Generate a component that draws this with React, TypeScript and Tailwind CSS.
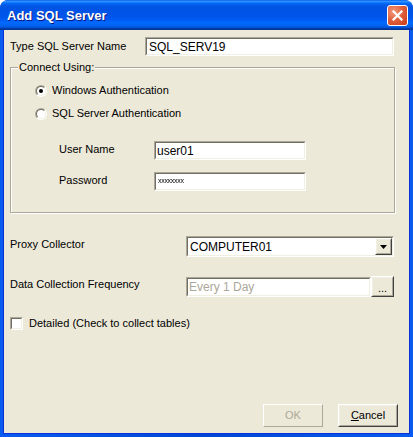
import React from "react";

const font = { fontFamily: '"Liberation Sans", Arial, sans-serif' };

function Sunken({ className = "", children }: { className?: string; children?: React.ReactNode }) {
  return (
    <div
      className={
        "border border-t-[#ACA899] border-l-[#ACA899] border-b-white border-r-white " + className
      }
    >
      <div className="h-full w-full border border-t-[#716F64] border-l-[#716F64] border-b-[#F1EFE2] border-r-[#F1EFE2] bg-white flex items-center">
        {children}
      </div>
    </div>
  );
}

function Raised({ className = "", children }: { className?: string; children?: React.ReactNode }) {
  return (
    <div
      className={
        "border border-t-white border-l-white border-b-[#404040] border-r-[#404040] " + className
      }
    >
      <div className="h-full w-full border border-t-[#F1EFE2] border-l-[#F1EFE2] border-b-[#ACA899] border-r-[#ACA899] bg-[#ECE9D8] flex items-center justify-center">
        {children}
      </div>
    </div>
  );
}

function Radio({ checked }: { checked?: boolean }) {
  return (
    <div className="w-[12px] h-[12px] rounded-full bg-[linear-gradient(135deg,#ACA899_50%,#FFFFFF_50%)] p-[1px]">
      <div className="w-full h-full rounded-full bg-white border border-t-[#716F64] border-l-[#716F64] border-b-[#F1EFE2] border-r-[#F1EFE2] flex items-center justify-center">
        {checked && <div className="w-[4px] h-[4px] rounded-full bg-black" />}
      </div>
    </div>
  );
}

export default function App() {
  return (
    <div
      className="w-[413px] h-[437px] rounded-t-[8px] bg-[#0846D8] flex flex-col overflow-hidden text-[11px] text-black"
      style={font}
    >
      {/* Title bar */}
      <div className="h-[30px] shrink-0 rounded-t-[8px] bg-[linear-gradient(to_bottom,#0058EE_0%,#3593FF_4%,#288EFF_6%,#127DFF_8%,#036FFC_10%,#0262EE_14%,#0057E5_20%,#0054E3_24%,#0055EB_56%,#005BF5_66%,#026AFE_76%,#0062EF_86%,#0052D6_92%,#0040AB_94%,#003092_100%)] flex items-center pl-[7px] pr-[5px]">
        <span className="text-white font-bold text-[13px] [text-shadow:1px_1px_0_#0A1883] flex-1 mt-[2px]">
          Add SQL Server
        </span>
        <div className="w-[21px] h-[21px] rounded-[3px] border border-white bg-[radial-gradient(circle_at_30%_30%,#F29A7E_0%,#E2623E_45%,#C63A15_100%)] flex items-center justify-center">
          <svg width="11" height="11" viewBox="0 0 11 11">
            <path d="M1.5 1.5 L9.5 9.5 M9.5 1.5 L1.5 9.5" stroke="white" strokeWidth="2.2" strokeLinecap="square" />
          </svg>
        </div>
      </div>

      {/* Frame + body */}
      <div className="flex-1 flex px-[3px] pb-[3px] bg-[linear-gradient(to_right,#0A5BF0,#0046D5_50%,#0A5BF0)]">
        <div className="flex-1 bg-[#ECE9D8] border border-[#0831D9] border-t-0 flex flex-col pt-[7px] pl-[6px]">
          {/* Row 1 */}
          <div className="flex items-center h-[19px]">
            <span className="w-[135px]">Type SQL Server Name</span>
            <Sunken className="w-[249px] h-[19px]">
              <span className="pl-[2px] text-[12px]">SQL_SERV19</span>
            </Sunken>
          </div>

          {/* Group box */}
          <div className="mt-[11px] w-[385px] h-[146px] border border-[#ACA899] shadow-[inset_1px_1px_0_#FFFFFF,1px_1px_0_#FFFFFF] flex flex-col">
            <span className="-mt-[7px] ml-[7px] px-[1px] h-[13px] leading-[13px] w-fit bg-[#ECE9D8]">
              Connect Using:
            </span>
            <div className="mt-[10px] ml-[24px] flex items-center h-[13px] gap-[5px]">
              <Radio checked />
              <span>Windows Authentication</span>
            </div>
            <div className="mt-[10px] ml-[24px] flex items-center h-[13px] gap-[5px]">
              <Radio />
              <span>SQL Server Authentication</span>
            </div>
            <div className="mt-[21px] ml-[48px] flex items-center h-[19px]">
              <span className="w-[95px] -mt-[2px]">User Name</span>
              <Sunken className="w-[152px] h-[19px]">
                <span className="pl-[1px] text-[12px]">user01</span>
              </Sunken>
            </div>
            <div className="mt-[12px] ml-[48px] flex items-center h-[19px]">
              <span className="w-[95px] -mt-[2px]">Password</span>
              <Sunken className="w-[152px] h-[19px]">
                <span className="pl-[2px] text-[7px] text-black tracking-[-0.3px] [-webkit-font-smoothing:antialiased] [font-smooth:always] grayscale">xxxxxxxx</span>
              </Sunken>
            </div>
          </div>

          {/* Proxy Collector */}
          <div className="mt-[23px] flex items-center h-[21px]">
            <span className="w-[176px] -mt-[5px]">Proxy Collector</span>
            <Sunken className="w-[208px] h-[21px]">
              <span className="flex-1 pl-[2px] text-[12px]">COMPUTER01</span>
              <Raised className="w-[17px] h-[17px]">
                <svg width="7" height="4" viewBox="0 0 7 4">
                  <path d="M0 0 H7 L3.5 4 Z" fill="black" />
                </svg>
              </Raised>
            </Sunken>
          </div>

          {/* Data Collection Frequency */}
          <div className="mt-[19px] flex items-center h-[21px]">
            <span className="w-[176px] -mt-[5px]">Data Collection Frequency</span>
            <Sunken className="w-[185px] h-[20px]">
              <span className="pl-[1px] text-[12px] text-[#ACA899]">Every 1 Day</span>
            </Sunken>
            <Raised className="w-[23px] h-[21px]">
              <span className="text-[11px] leading-none -mb-[3px]">...</span>
            </Raised>
          </div>

          {/* Checkbox */}
          <div className="mt-[20px] flex items-center h-[13px] gap-[6px]">
            <div className="w-[13px] h-[13px] border border-t-[#ACA899] border-l-[#ACA899] border-b-white border-r-white">
              <div className="w-full h-full bg-white border border-t-[#716F64] border-l-[#716F64] border-b-[#F1EFE2] border-r-[#F1EFE2]" />
            </div>
            <span>Detailed (Check to collect tables)</span>
          </div>

          {/* Buttons */}
          <div className="mt-auto mb-[6px] mr-[11px] flex justify-end gap-[15px]">
            <div className="w-[60px] h-[23px] border border-t-white border-l-white border-b-[#ACA899] border-r-[#ACA899] flex items-center justify-center text-[#ACA899]">
              OK
            </div>
            <Raised className="w-[60px] h-[23px]">
              <span>
                <span className="underline">C</span>ancel
              </span>
            </Raised>
          </div>
        </div>
      </div>
    </div>
  );
}
